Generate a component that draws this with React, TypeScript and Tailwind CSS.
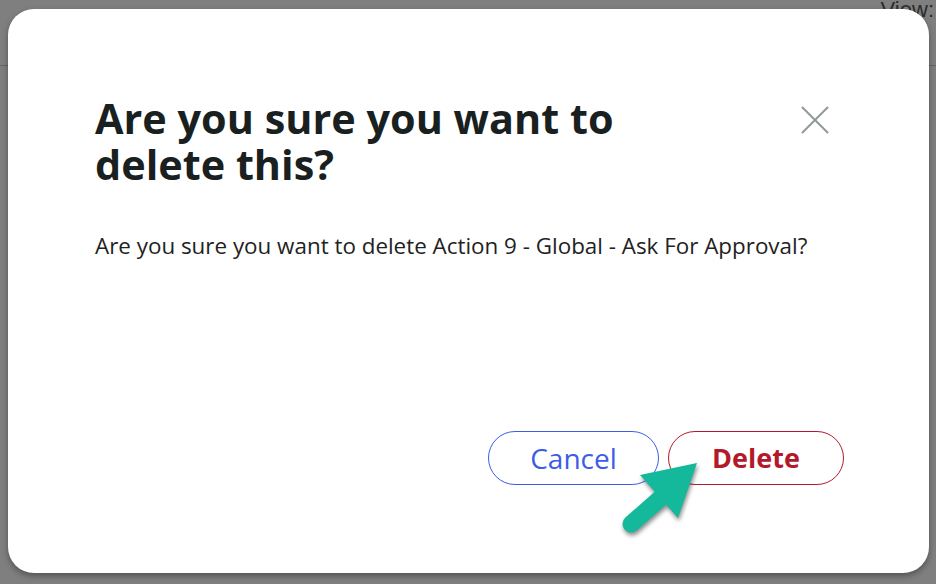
import { X } from 'lucide-react';

function Arrow() {
  return (
    <svg className="absolute left-[615px] top-[455px] drop-shadow-[1px_3px_2px_rgba(0,0,0,0.45)]" width="95" height="80" viewBox="615 455 95 80">
      <path d="M631 524 L664 495" stroke="#14b89a" strokeWidth="17" strokeLinecap="round" fill="none" />
      <path d="M640 475 L697 463 L678 518 Z" fill="#14b89a" />
    </svg>
  );
}

export default function App() {
  return (
    <main className="relative h-[584px] w-[936px] overflow-hidden bg-[#7f7f7f] font-['Open_Sans',sans-serif]">
      {/* page behind the overlay */}
      <div className="flex h-[66px] justify-end border-b border-[#5e6868]">
        <span className="mr-[2px] mt-[-7px] font-['Liberation_Sans',sans-serif] text-[22px] text-[#2c2c2c]">View:</span>
      </div>

      <div className="absolute left-[8px] top-[9px] flex h-[564px] w-[921px] flex-col rounded-[26px] bg-white pl-[87px] pr-[99px] pt-[86px] shadow-[0_3px_6px_rgba(0,0,0,0.35)]">
        <div className="flex items-start justify-between">
          <h1 className="text-[41.4px] font-bold leading-[46px] text-[#1a1f1f]">
            Are you sure you want to <br />
            delete this?
          </h1>
          <button className="mr-[-10px] mt-[0px] text-[#8c9a9a]">
            <X size={50} strokeWidth={2} absoluteStrokeWidth />
          </button>
        </div>

        <p className="mt-[44px] text-[22.4px] leading-[30px] text-[#1f2222]">
          Are you sure you want to delete Action 9 - Global - Ask For Approval?
        </p>

        <div className="mt-[170px] flex justify-end gap-[9px]">
          <button className="h-[54px] w-[171px] rounded-full border-[1.5px] border-[#3d5ce8] text-[28px] text-[#3d5ce8]">
            Cancel
          </button>
          <button className="mr-[-14px] h-[54px] w-[176px] rounded-full border-[1.5px] border-[#b3192b] text-[27px] font-bold text-[#b3192b]">
            Delete
          </button>
        </div>
      </div>

      <Arrow />
    </main>
  );
}
